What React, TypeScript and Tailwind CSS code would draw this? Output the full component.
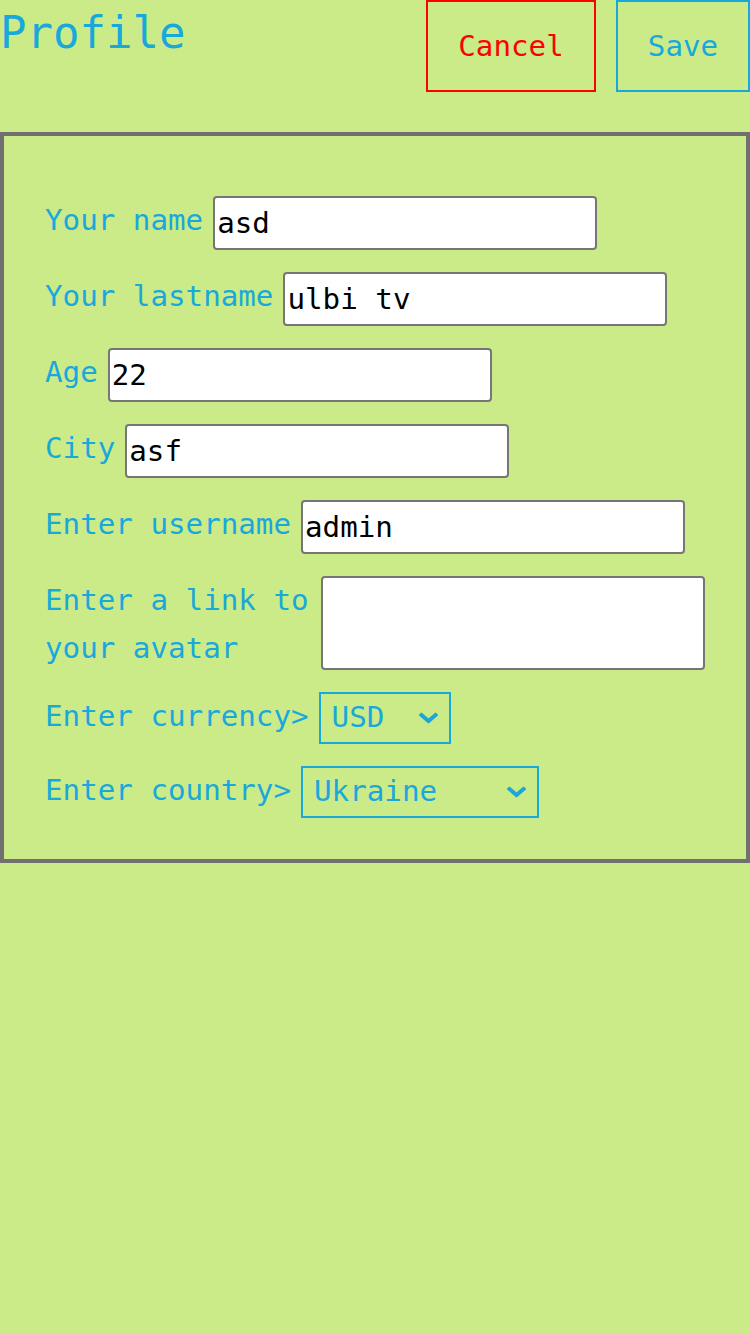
import React from 'react';

const MONO = "font-['DejaVu_Sans_Mono','Liberation_Mono',monospace]";

const Chevron: React.FC = () => (
  <svg width="19" height="11" viewBox="0 0 19 11" className="pointer-events-none absolute right-[13px] top-1/2 -translate-y-1/2">
    <path d="M2.5 2.5 L9.5 8.5 L16.5 2.5" fill="none" stroke="#19a8dc" strokeWidth="4" strokeLinecap="square" />
  </svg>
);

const TextRow: React.FC<{ label: string; value: string }> = ({ label, value }) => (
  <div className="flex items-start gap-[10px]">
    <label className="whitespace-pre leading-[48px] text-[#19a8dc]">{label}</label>
    <input
      defaultValue={value}
      className="h-[54px] w-[384px] rounded-[4px] border-2 border-[#767676] bg-white px-[2px] text-black outline-none"
    />
  </div>
);

const SelectRow: React.FC<{ label: string; options: string[]; width: string }> = ({ label, options, width }) => (
  <div className="flex items-start gap-[10px]">
    <label className="whitespace-pre leading-[48px] text-[#19a8dc]">{label}</label>
    <div className={`relative ${width}`}>
      <select className="h-[52px] w-full appearance-none border-2 border-[#19a8dc] bg-transparent pl-[11px] text-[#19a8dc] outline-none">
        {options.map(o => (
          <option key={o}>{o}</option>
        ))}
      </select>
      <Chevron />
    </div>
  </div>
);

export default function App() {
  return (
    <div className={`min-h-[1334px] w-[750px] bg-[#cbeb88] ${MONO} text-[29.2px]`}>
      {/* header */}
      <div className="mb-[40px] flex items-start justify-between">
        <h1 className="text-[44px] leading-[66px] text-[#19a8dc]">Profile</h1>
        <div className="flex gap-[20px]">
          <button className="h-[92px] w-[170px] border-2 border-[#ff0000] pt-[2px] text-[#ff0000]">Cancel</button>
          <button className="h-[92px] w-[134px] border-2 border-[#19a8dc] pt-[2px] text-[#19a8dc]">Save</button>
        </div>
      </div>

      {/* form card */}
      <div className="flex flex-col gap-[22px] border-4 border-[#707070] pb-[41px] pl-[41px] pt-[60px]">
        <TextRow label="Your name" value="asd" />
        <TextRow label="Your lastname" value="ulbi tv" />
        <TextRow label="Age" value="22" />
        <TextRow label="City" value="asf" />
        <TextRow label="Enter username" value="admin" />
        <div className="flex h-[94px] items-start gap-[12px]">
          <label className="w-[264px] leading-[48px] text-[#19a8dc]">
            Enter a link to
            <br />
            your avatar
          </label>
          <textarea className="h-[94px] w-[384px] resize-none rounded-[4px] border-2 border-[#767676] bg-white px-[2px] text-black outline-none" />
        </div>
        <SelectRow label="Enter currency>" options={['USD', 'EUR', 'RUB']} width="w-[132px]" />
        <SelectRow label="Enter country>" options={['Ukraine', 'Armenia', 'Belarus', 'Kazakhstan', 'Russia']} width="w-[238px]" />
      </div>
    </div>
  );
}
